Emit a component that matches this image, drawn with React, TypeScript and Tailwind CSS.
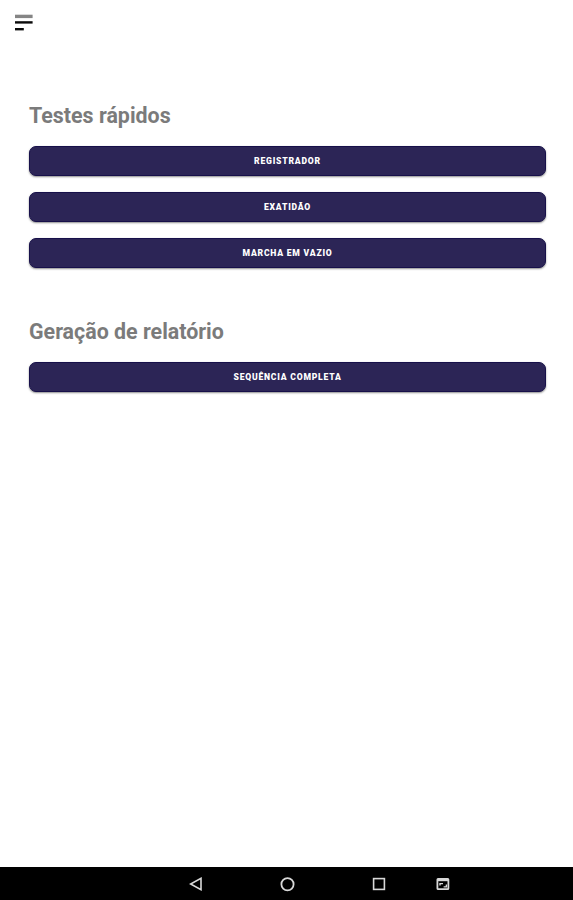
import type { ReactNode } from 'react';

interface SectionProps {
  title: string;
  actions: string[];
}

function MenuIcon() {
  return (
    <svg width="18" height="17" viewBox="0 0 18 17" aria-hidden="true">
      <rect x="0" y="0.7" width="17.6" height="3.4" fill="#858585" />
      <rect x="0" y="7.2" width="17.6" height="2.4" fill="#0a0a0a" />
      <rect x="0" y="14" width="8.8" height="2.4" fill="#0a0a0a" />
    </svg>
  );
}

function ActionButton({ children }: { children: ReactNode }) {
  return (
    <button
      type="button"
      className="flex h-[30px] w-full items-center justify-center rounded-[7px] border border-[#17104a] bg-[#2c2556] pt-px text-[8.6px] font-black tracking-[0.78px] text-white shadow-[0_1px_2px_rgba(0,0,0,0.45)]"
    >
      {children}
    </button>
  );
}

function Section({ title, actions }: SectionProps) {
  return (
    <section>
      <h2 className="text-[21.4px] leading-7 font-bold text-[#7b7b7b]">{title}</h2>
      <div className="mt-4 flex flex-col gap-4">
        {actions.map((action) => (
          <ActionButton key={action}>{action}</ActionButton>
        ))}
      </div>
    </section>
  );
}

/** Android system bar: back, home, recents and screenshot */
function NavigationBar() {
  return (
    <nav className="flex h-[33px] items-center bg-black pt-px pl-[189px] text-[#d8d8d8]">
      <svg width="14" height="14" viewBox="0 0 14 14" fill="none" stroke="currentColor" strokeWidth="1.6">
        <path d="M12 1.3v11.4L1.6 7z" />
      </svg>
      <svg className="ml-[77px]" width="15" height="15" viewBox="0 0 15 15" fill="none" stroke="currentColor" strokeWidth="1.8">
        <circle cx="7.5" cy="7.2" r="6.1" />
      </svg>
      <svg className="ml-[77px]" width="14" height="14" viewBox="0 0 14 14" fill="none" stroke="currentColor" strokeWidth="1.6">
        <rect x="1.6" y="1.6" width="10.8" height="10.8" />
      </svg>
      <svg className="ml-[50px]" width="14" height="14" viewBox="0 0 14 14" fill="none" stroke="currentColor" strokeWidth="1.8">
        <rect x="1.4" y="1.8" width="11" height="10.4" rx="0.8" />
        <path d="M1.5 2.9h11" strokeWidth="2.6" />
        <path d="M4 8.4V6.6h3M10.4 7.4v2.5H7.6" strokeWidth="1.4" />
      </svg>
    </nav>
  );
}

export default function App() {
  return (
    <div className="flex h-screen flex-col bg-white font-['Roboto',sans-serif]">
      <header className="flex h-[102px] items-start pt-[14px] pl-[15px]">
        <button type="button" aria-label="Menu">
          <MenuIcon />
        </button>
      </header>
      <main className="flex flex-1 flex-col gap-[50px] pr-[27px] pl-[29px]">
        <Section title="Testes rápidos" actions={['REGISTRADOR', 'EXATIDÃO', 'MARCHA EM VAZIO']} />
        <Section title="Geração de relatório" actions={['SEQUÊNCIA COMPLETA']} />
      </main>
      <NavigationBar />
    </div>
  );
}
